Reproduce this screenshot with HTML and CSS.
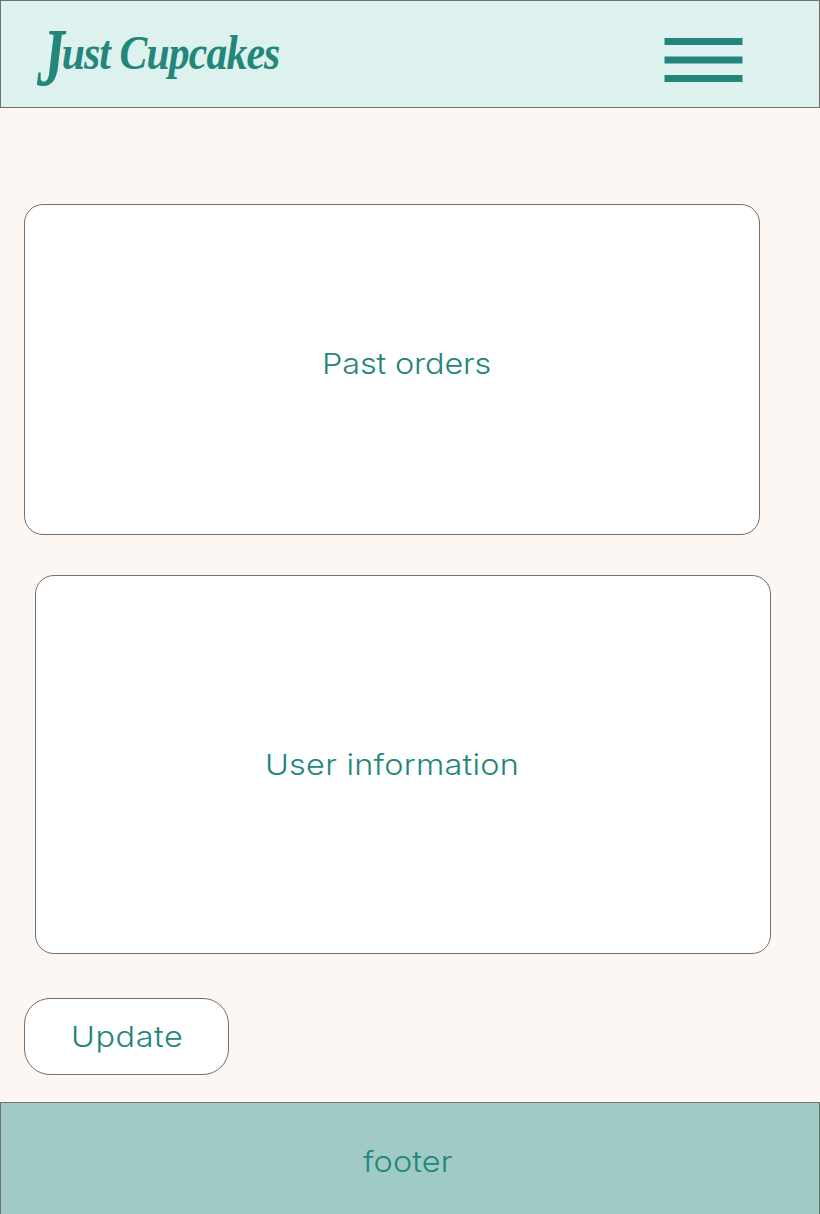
FILE: index.html
```html
<!DOCTYPE html>
<html lang="en">
<head>
<meta charset="utf-8">
<title>Just Cupcakes</title>
<link rel="stylesheet" href="styles.css">
</head>
<body>
<header class="header">
  <div class="logo"><span class="logo-initial">J</span>ust Cupcakes</div>
  <svg class="menu" width="80" height="44" viewBox="0 0 80 44" fill="#23867b" role="img" aria-label="Menu">
    <rect x=".5" y="0" width="78" height="7"/>
    <rect x=".5" y="18.5" width="78" height="7"/>
    <rect x=".5" y="37" width="78" height="7"/>
  </svg>
</header>
<main class="main">
  <section class="panel orders"><span class="label">Past orders</span></section>
  <section class="panel info"><span class="label">User information</span></section>
  <button class="update"><span class="label">Update</span></button>
</main>
<footer class="footer"><span class="label">footer</span></footer>
</body>
</html>
```

FILE: styles.css
```css
* { box-sizing: border-box; }
body {
  margin: 0;
  height: 1214px;
  display: flex;
  flex-direction: column;
  overflow: hidden;
  background: #fdf7f3;
  color: #23867b;
  font: 300 29px/36px Inter, "Open Sans", sans-serif;
}
.header {
  height: 108px;
  flex: none;
  display: flex;
  justify-content: space-between;
  align-items: flex-start;
  padding: 22px 75px 0 36px;
  background: #ddf1ee;
  border: 1px solid #707070;
}
.logo {
  display: flex;
  font: italic 700 49px/60px "Liberation Serif", serif;
  letter-spacing: -1px;
  white-space: pre;
  transform: scaleX(.85);
  transform-origin: left;
}
/* The initial drops below the baseline of the wordmark. */
.logo-initial {
  width: 29px;
  font-size: 82px;
  transform: translateY(5px) scaleX(.8);
  transform-origin: left;
}
.menu { margin-top: 15px; }
.main {
  flex: 1;
  display: flex;
  flex-direction: column;
  align-items: flex-start;
  padding: 96px 24px 0;
}
.panel {
  width: 736px;
  background: #fff;
  border: 1px solid #707070;
  border-radius: 19px;
}
.label {
  display: inline-block;
  white-space: nowrap;
  transform: scaleX(1.12);
  transform-origin: left;
}
.orders {
  height: 331px;
  padding: 141px 0 0 297px;
  letter-spacing: -.15px;
}
.info {
  height: 379px;
  margin: 40px 0 44px 11px;
  padding: 171px 0 0 229px;
  letter-spacing: .2px;
}
.update {
  width: 205px;
  height: 77px;
  padding: 0 0 0 46px;
  display: flex;
  align-items: center;
  background: #fff;
  border: 1px solid #707070;
  border-radius: 26px;
  color: inherit;
  font: inherit;
  letter-spacing: .5px;
}
.footer {
  height: 112px;
  flex: none;
  padding: 41px 0 0 362px;
  background: #a0cac6;
  border: 1px solid #707070;
  border-bottom: 0;
  letter-spacing: .1px;
}
```
